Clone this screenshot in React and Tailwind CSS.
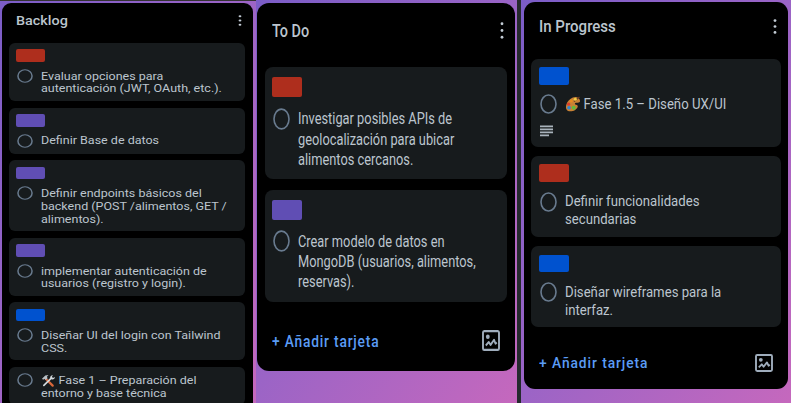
const LABELS = { red: "bg-[#ae2e1d]", purple: "bg-[#604eb4]", blue: "bg-[#0052cf]" };

const SIZES = {
  short: {
    list: "gap-[6.6px] pl-[7.5px] pr-[7.5px]",
    card: "rounded-[6px] px-[7px] pt-[6.2px] pb-[4.9px]",
    label: "h-[12.7px] w-[29px] mb-[7px]",
    row: "gap-[8px]",
    circle: "h-[14px] w-[16px] ml-[1px] mb-[1.4px]",
    body: "pt-[1.9px]",
    text: "text-[11px] leading-[12.7px] scale-x-[1.137]",
  },
  tall: {
    list: "gap-[10.3px] px-[8px]",
    card: "rounded-[8px] px-[7px] pt-[10px] pb-[10.1px]",
    label: "h-[20px] w-[30px] mb-[11px]",
    row: "gap-[8px]",
    circle: "h-[22px] w-[17px] ml-[1px] mt-[-0.4px]",
    body: "pt-[0.3px]",
    text: "text-[16.8px] leading-[20.3px] scale-x-[0.764]",
  },
  medium: {
    list: "gap-[9px] px-[7px]",
    card: "rounded-[7px] px-[8px] pt-[8.6px] pb-[8.1px]",
    label: "h-[17.5px] w-[30px] mb-[10.6px]",
    row: "gap-[8px]",
    circle: "h-[20px] w-[17px] ml-[1px] mt-[-1px]",
    body: "pt-[0.9px]",
    text: "text-[14.9px] leading-[17.8px] scale-x-[0.884]",
  },
};

function Tools() {
  return (
    <svg viewBox="0 0 16 14" className="absolute left-0 top-[1px] h-[13px] w-[15px]" fill="none">
      <path d="M4.5 4.5 12.5 12.5" stroke="#d9673a" strokeWidth="2.4" strokeLinecap="round" />
      <path d="M1 5 4.5 1.6 8 1.2 6.3 3 7 4.6 5 6.4 3.6 5.2 2.2 6.3Z" fill="#b9c0c6" />
      <path d="M3 12.3 11 4.4" stroke="#d3d9dd" strokeWidth="1.8" strokeLinecap="round" />
      <path d="M10 4.8c-.8-2 .7-3.6 2.8-3.5L11.6 3l1.2 1.2 2-1c.2 2-1.6 3.2-3.6 2.5Z" fill="#d3d9dd" />
    </svg>
  );
}

function Palette() {
  return (
    <svg viewBox="0 0 16 16" preserveAspectRatio="none" className="absolute left-0 top-[1px] h-[16px] w-[16px]">
      <path d="M15 4.6C14 .4 9.2-.2 5.3 3 1.6 6 .1 10.4 1.4 13.2c1.3 2.7 5.6 2.8 8.7.7 2-1.4 3.2-3 2.4-4.3-.6-1-2.3-.5-2.6-1.6-.3-1.2 1.3-1.2 2.9-1.2 1.5 0 2.5-.8 2.2-2.2Z" fill="#c98235" />
      <path d="M9 5.5 14.5 1" stroke="#6e3c20" strokeWidth="1.3" />
      <circle cx="10.3" cy="3.3" r="1.5" fill="#f0cf45" />
      <circle cx="6.3" cy="5" r="1.6" fill="#e88b20" />
      <circle cx="3.6" cy="8.2" r="1.6" fill="#dc3d2b" />
      <circle cx="4" cy="11.8" r="1.8" fill="#2f86d4" />
      <circle cx="8.7" cy="11.7" r="2" fill="#62bb3a" />
    </svg>
  );
}

function Description() {
  return (
    <svg viewBox="0 0 13 12" className="mt-[10.5px] mb-[2px] ml-[1px] h-[12px] w-[13px]" fill="#a9b3bc">
      <path d="M0 .5h13v1.8H0zM0 3.5h13v1.8H0zM0 6.5h13v1.8H0zM0 9.5h9v1.8H0z" />
    </svg>
  );
}

function ImageIcon({ className }) {
  return (
    <svg viewBox="0 0 18 18" preserveAspectRatio="none" className={className} fill="none" stroke="#9fadbc">
      <rect x="1" y="1" width="16" height="16" rx="1.2" strokeWidth="1.9" />
      <circle cx="5.8" cy="5.8" r="1.9" fill="#9fadbc" stroke="none" />
      <path d="M3.8 13.3 6.8 10.3l1.8 2.5 3.4-4.4 1.5 3.3 1.3-1" strokeWidth="1.8" strokeLinejoin="round" />
    </svg>
  );
}

function More({ className }) {
  return (
    <svg viewBox="0 0 4 16" preserveAspectRatio="none" className={className} fill="#c3ccd5">
      <ellipse cx="2" cy="1.7" rx="1.4" ry="1.4" />
      <ellipse cx="2" cy="8" rx="1.4" ry="1.4" />
      <ellipse cx="2" cy="14.3" rx="1.4" ry="1.4" />
    </svg>
  );
}

function Circle({ className }) {
  return (
    <svg viewBox="0 0 17 20" preserveAspectRatio="none" className={`shrink-0 ${className}`} fill="none">
      <ellipse cx="8.5" cy="10" rx="7.5" ry="9" stroke="#697b8f" strokeWidth="1.6" />
    </svg>
  );
}

function Card({ size, label, lines, emoji, indent = "", description }) {
  const s = SIZES[size];
  return (
    <article className={`shrink-0 bg-[#171b1d] ${s.card}`}>
      {label && <div className={`rounded-[2px] ${LABELS[label]} ${s.label}`} />}
      <div className={`flex items-start ${s.row}`}>
        <Circle className={s.circle} />
        <div className={`relative ${s.body}`}>
          {emoji}
          {lines.map((line, i) => (
            <p key={line} className={`origin-left whitespace-nowrap ${s.text}`}>
              <span className={i === 0 ? indent : ""}>{line}</span>
            </p>
          ))}
        </div>
      </div>
      {description && <Description />}
    </article>
  );
}

function AddCard({ className, textClass, iconClass }) {
  return (
    <footer className={`flex items-center justify-between ${className}`}>
      <span className={`origin-left whitespace-nowrap font-medium text-[#5b9cf5] ${textClass}`}>+ Añadir tarjeta</span>
      <ImageIcon className={iconClass} />
    </footer>
  );
}

function Title({ children, className }) {
  return <h2 className={`origin-left whitespace-nowrap font-medium ${className}`}>{children}</h2>;
}

export default function App() {
  return (
    <main className="flex h-[403px] w-[791px] overflow-hidden bg-[#252a2e] font-['Roboto',sans-serif] text-[#bcc5ce]">
      <section className="h-full w-[256px] shrink-0 border-t border-[#333] bg-[linear-gradient(125deg,#7b5dc7_0%,#9b64c6_45%,#c568bd_100%)] pt-[2px] pl-[1.5px]">
        <div className="h-[420px] w-[251px] rounded-t-[9px] bg-black">
          <header className="flex h-[40px] justify-between pt-[10px] pr-[11px] pl-[14.5px]">
            <Title className="scale-x-[1.15] text-[12.5px] leading-[15px]">Backlog</Title>
            <More className="mt-[1.5px] h-[11px] w-[4px]" />
          </header>
          <div className={`flex flex-col ${SIZES.short.list}`}>
            <Card size="short" label="red" lines={["Evaluar opciones para", "autenticación (JWT, OAuth, etc.)."]} />
            <Card size="short" label="purple" lines={["Definir Base de datos"]} />
            <Card size="short" label="purple" lines={["Definir endpoints básicos del", "backend (POST /alimentos, GET /", "alimentos)."]} />
            <Card size="short" label="purple" lines={["implementar autenticación de", "usuarios (registro y login)."]} />
            <Card size="short" label="blue" lines={["Diseñar UI del login con Tailwind", "CSS."]} />
            <Card size="short" emoji={<Tools />} indent="ml-[15.5px]" lines={["Fase 1 – Preparación del", "entorno y base técnica"]} />
          </div>
        </div>
      </section>

      <section className="h-full w-[261px] shrink-0 bg-[linear-gradient(125deg,#7b5dc7_0%,#9b64c6_50%,#c568bd_100%)] pt-[3px] pl-[1.3px]">
        <div className="h-[368px] w-[257.5px] rounded-[12px] bg-black">
          <header className="flex h-[64px] justify-between pt-[17px] pr-[11px] pl-[15px]">
            <Title className="scale-x-[0.76] text-[19px] leading-[22px]">To Do</Title>
            <More className="mt-[2px] h-[17px] w-[4px]" />
          </header>
          <div className={`flex flex-col ${SIZES.tall.list}`}>
            <Card size="tall" label="red" lines={["Investigar posibles APIs de", "geolocalización para ubicar", "alimentos cercanos."]} />
            <Card size="tall" label="purple" lines={["Crear modelo de datos en", "MongoDB (usuarios, alimentos,", "reservas)."]} />
          </div>
          <AddCard className="mt-[28.6px] pr-[15px] pl-[15px]" textClass="scale-x-[0.81] text-[17px] leading-[20px] tracking-[1px]" iconClass="h-[21px] w-[18px]" />
        </div>
      </section>

      <div className="w-[4px] shrink-0" />

      <section className="h-full w-[270px] shrink-0 bg-[linear-gradient(125deg,#7b5dc7_0%,#9b64c6_50%,#c568bd_100%)] pt-[2px] pl-[3px]">
        <div className="h-[386.5px] w-[264px] rounded-[11px] bg-black">
          <header className="flex h-[56.6px] justify-between pt-[14px] pr-[11.5px] pl-[15px]">
            <Title className="scale-x-[0.87] text-[17.3px] leading-[20px]">In Progress</Title>
            <More className="mt-[2.5px] h-[15px] w-[4px]" />
          </header>
          <div className={`flex flex-col ${SIZES.medium.list}`}>
            <Card size="medium" label="blue" emoji={<Palette />} indent="ml-[21px]" lines={["Fase 1.5 – Diseño UX/UI"]} description />
            <Card size="medium" label="red" lines={["Definir funcionalidades", "secundarias"]} />
            <Card size="medium" label="blue" lines={["Diseñar wireframes para la", "interfaz."]} />
          </div>
          <AddCard className="mt-[26px] pr-[15px] pl-[15px]" textClass="pt-[1px] scale-x-[0.92] text-[15px] leading-[18px] tracking-[1px]" iconClass="h-[18px] w-[18px]" />
        </div>
      </section>
    </main>
  );
}
